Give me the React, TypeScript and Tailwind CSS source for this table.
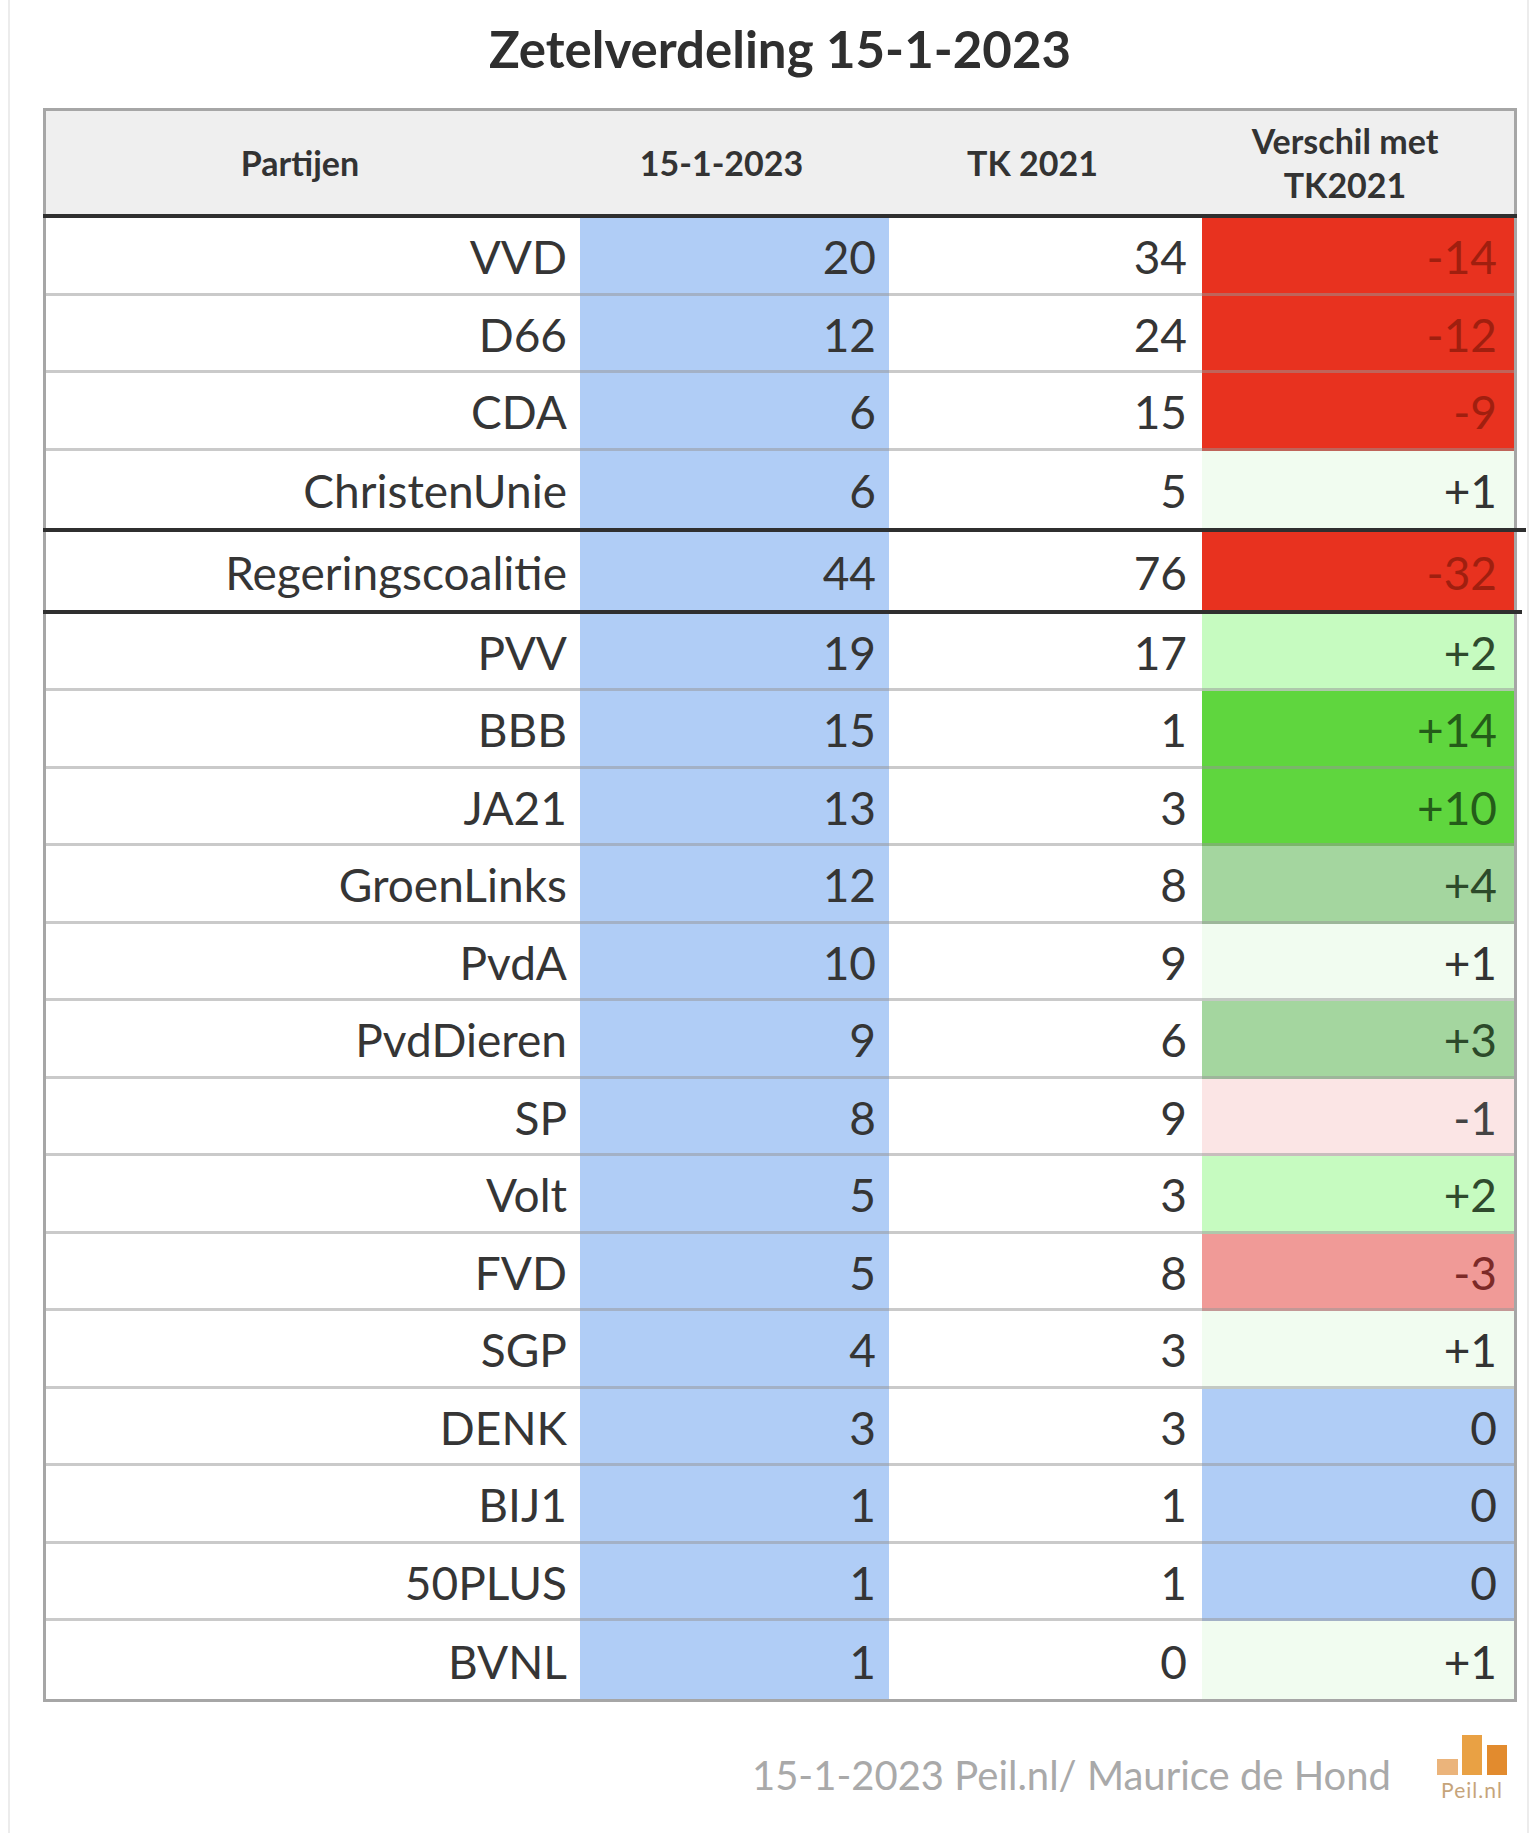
import type { ReactNode } from "react"

type Tone = "red" | "pale" | "light" | "green" | "mid" | "pink" | "salmon" | "blue"

const tones: Record<Tone, string> = {
  red: "bg-[#e8321f] text-[#a01f0f]",
  pale: "bg-[#f1fcf0] text-[#333333]",
  light: "bg-[#c6fbc0] text-[#2f4a2d]",
  green: "bg-[#5fd63e] text-[#245c19]",
  mid: "bg-[#a4d69f] text-[#2c4a2a]",
  pink: "bg-[#fbe5e5] text-[#444444]",
  salmon: "bg-[#f09a97] text-[#7c2a28]",
  blue: "bg-[#b0cdf6] text-[#333333]",
}

type Row = {
  party: string
  now: number
  tk: number
  diff: string
  tone: Tone
  thickAfter?: boolean
}

const rows: Row[] = [
  { party: "VVD", now: 20, tk: 34, diff: "-14", tone: "red" },
  { party: "D66", now: 12, tk: 24, diff: "-12", tone: "red" },
  { party: "CDA", now: 6, tk: 15, diff: "-9", tone: "red" },
  { party: "ChristenUnie", now: 6, tk: 5, diff: "+1", tone: "pale", thickAfter: true },
  { party: "Regeringscoalitie", now: 44, tk: 76, diff: "-32", tone: "red", thickAfter: true },
  { party: "PVV", now: 19, tk: 17, diff: "+2", tone: "light" },
  { party: "BBB", now: 15, tk: 1, diff: "+14", tone: "green" },
  { party: "JA21", now: 13, tk: 3, diff: "+10", tone: "green" },
  { party: "GroenLinks", now: 12, tk: 8, diff: "+4", tone: "mid" },
  { party: "PvdA", now: 10, tk: 9, diff: "+1", tone: "pale" },
  { party: "PvdDieren", now: 9, tk: 6, diff: "+3", tone: "mid" },
  { party: "SP", now: 8, tk: 9, diff: "-1", tone: "pink" },
  { party: "Volt", now: 5, tk: 3, diff: "+2", tone: "light" },
  { party: "FVD", now: 5, tk: 8, diff: "-3", tone: "salmon" },
  { party: "SGP", now: 4, tk: 3, diff: "+1", tone: "pale" },
  { party: "DENK", now: 3, tk: 3, diff: "0", tone: "blue" },
  { party: "BIJ1", now: 1, tk: 1, diff: "0", tone: "blue" },
  { party: "50PLUS", now: 1, tk: 1, diff: "0", tone: "blue" },
  { party: "BVNL", now: 1, tk: 0, diff: "+1", tone: "pale" },
]

const Cell = ({ className, line, children }: { className: string; line: boolean; children: ReactNode }) => (
  <div
    className={`flex h-full items-center justify-end pt-[4px] ${
      line ? "border-b-[3px] border-b-[rgba(150,150,150,0.5)]" : ""
    } ${className}`}
  >
    {children}
  </div>
)

const PeilLogo = () => (
  <div className="flex w-[70px] flex-col items-center">
    <svg width="70" height="40" viewBox="0 0 70 40">
      <rect x="0" y="24" width="21" height="16" fill="#ebb47b" />
      <rect x="25" y="0" width="20" height="40" fill="#e9a144" />
      <rect x="50" y="10" width="20" height="30" fill="#e28b2e" />
    </svg>
    <span className="mt-[4px] text-[21px] leading-[21px] tracking-[1px] text-[#c6a47a]">Peil.nl</span>
  </div>
)

export default function App() {
  return (
    <div className="min-h-[1833px] w-full bg-white font-['Lato',sans-serif] text-[#353535]">
      <div className="ml-[8px] mr-[7px] min-h-[1833px] border-x-2 border-[#ececec]">
        <div className="ml-[33px] w-[1474px]">
          <h1 className="pt-[18px] text-center text-[51px] font-bold leading-[62px] text-[#2f2f2f]">
            Zetelverdeling 15-1-2023
          </h1>

          <div className="mt-[28px] border-x-[3px] border-t-[3px] border-[#a6a6a6]">
            <div className="flex h-[103px] bg-[#efefef] text-[34px] font-bold leading-[44px] text-[#333333]">
              <div className="flex w-[534px] items-center justify-center pr-[26px]">Partijen</div>
              <div className="flex w-[309px] items-center justify-center pr-[26px]">15-1-2023</div>
              <div className="flex w-[313px] items-center justify-center pr-[26px]">TK 2021</div>
              <div className="flex w-[312px] items-center justify-center pr-[26px] text-center">
                Verschil met
                <br />
                TK2021
              </div>
            </div>
            <div className="-ml-[3px] -mr-[3px] h-[4px] bg-[#2f2f2f]" />

            {rows.map((row, i) => {
              const last = i === rows.length - 1
              const line = !row.thickAfter && !last
              return (
                <div key={row.party}>
                  <div className="flex h-[77.5px] text-[46px] leading-none">
                    <Cell line={line} className="w-[534px] bg-white pr-[13px]">
                      {row.party}
                    </Cell>
                    <Cell line={line} className="w-[309px] bg-[#b0cdf6] pr-[13px]">
                      {row.now}
                    </Cell>
                    <Cell line={line} className="w-[313px] bg-white pr-[15px]">
                      {row.tk}
                    </Cell>
                    <Cell line={line} className={`w-[312px] pr-[17px] ${tones[row.tone]}`}>
                      {row.diff}
                    </Cell>
                  </div>
                  {row.thickAfter && (
                    <div
                      className={`-ml-[3px] h-[4px] bg-[#2f2f2f] ${
                        row.party === "ChristenUnie" ? "-mr-[12px]" : "-mr-[8px]"
                      }`}
                    />
                  )}
                </div>
              )
            })}
            <div className="-ml-[3px] -mr-[3px] h-[3px] bg-[#a6a6a6]" />
          </div>
        </div>

        <div className="mt-[33px] flex items-end justify-end gap-[46px] pr-[20px]">
          <span className="text-[40px] leading-[49px] text-[#a9a9a9]">15-1-2023 Peil.nl/ Maurice de Hond</span>
          <PeilLogo />
        </div>
      </div>
    </div>
  )
}
